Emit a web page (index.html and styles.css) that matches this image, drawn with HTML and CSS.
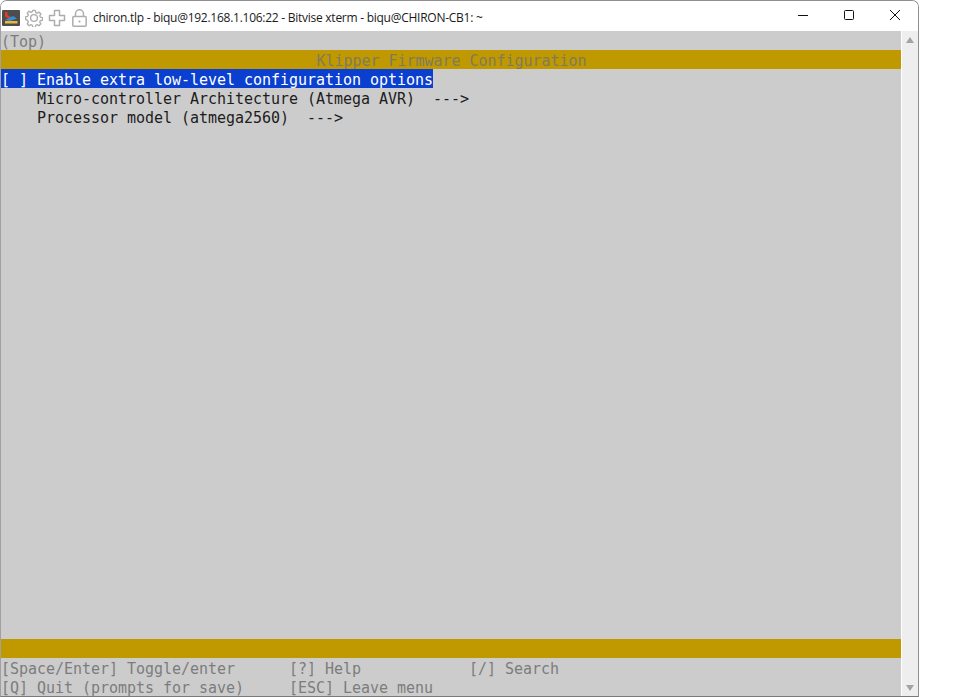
FILE: index.html
```html
<!DOCTYPE html>
<html lang="en">
<head>
<meta charset="utf-8">
<title>Bitvise xterm</title>
<link rel="stylesheet" href="styles.css">
</head>
<body>
<div class="window">
  <header class="titlebar">
    <div class="tools">
      <svg class="app-icon" width="18" height="16" viewBox="0 0 18 16">
        <rect width="18" height="16" rx="1" fill="#4d4d4d"/>
        <path d="M3 2h2.500v3l6 3.500H6L3 6.500z" fill="#e23b2e"/>
        <path d="M3 10l8-4 4 2.500-7 2.500z" fill="#2f8fd8"/>
        <path d="M3 11h12.500v2.500H3z" fill="#f2b632"/>
      </svg>
      <svg class="tool-gear" width="18" height="18" viewBox="0 0 18 18" fill="none" stroke="#adadad" stroke-width="1.4">
        <path d="M7.600 1h2.800l.4 2.200 1.500.7 1.900-1.200 2 2-1.200 1.900.7 1.500 2.200.4v2.800l-2.200.4-.7 1.500 1.200 1.900-2 2-1.900-1.200-1.500.7-.4 2.200H7.600l-.4-2.200-1.500-.7-1.900 1.200-2-2 1.200-1.900-.7-1.500L.1 10.400V7.600l2.200-.4.7-1.500-1.200-1.900 2-2 1.900 1.200 1.500-.7z" transform="translate(.5 .5) scale(.95)" stroke-linejoin="round"/>
        <circle cx="9" cy="9" r="3.400"/>
      </svg>
      <svg class="tool-plus" width="18" height="18" viewBox="0 0 18 18" fill="none" stroke="#adadad" stroke-width="1.5">
        <path d="M6.500 1.500h5v5h5v5h-5v5h-5v-5h-5v-5h5z" stroke-linejoin="round"/>
      </svg>
      <svg class="tool-lock" width="15" height="18" viewBox="0 0 15 18" fill="none" stroke="#adadad" stroke-width="1.500">
        <rect x=".8" y="7.500" width="13.400" height="9.700" rx="1"/>
        <path d="M3.500 7.500V4.800a4 4 0 0 1 8 0v2.700"/>
        <path d="M7.500 11.500v2" stroke-width="1.800"/>
      </svg>
    </div>
    <div class="title">chiron.tlp - biqu@192.168.1.106:22 - Bitvise xterm - biqu@CHIRON-CB1: ~</div>
    <div class="controls">
      <svg width="12" height="12" viewBox="0 0 12 12" fill="none" stroke="#111" stroke-width="1"><path d="M1 6.500h10"/></svg>
      <svg width="12" height="12" viewBox="0 0 12 12" fill="none" stroke="#111" stroke-width="1"><rect x="1.500" y="1.500" width="9" height="9" rx="1"/></svg>
      <svg width="12" height="12" viewBox="0 0 12 12" fill="none" stroke="#111" stroke-width="1"><path d="M1 1l10 10M11 1L1 11"/></svg>
    </div>
  </header>
  <div class="body">
    <main class="terminal">
      <div class="row dim">(Top)</div>
      <div class="row bar bar-title">Klipper Firmware Configuration</div>
      <div class="row selected">[ ] Enable extra low-level configuration options</div>
      <div class="row">    Micro-controller Architecture (Atmega AVR)  ---&gt;</div>
      <div class="row">    Processor model (atmega2560)  ---&gt;</div>
      <div class="spacer"></div>
      <div class="row bar"></div>
      <div class="row dim">[Space/Enter] Toggle/enter      [?] Help            [/] Search</div>
      <div class="row dim">[Q] Quit (prompts for save)     [ESC] Leave menu</div>
    </main>
    <aside class="scrollbar">
      <span class="arrow arrow-up"></span>
      <span class="arrow arrow-down"></span>
    </aside>
  </div>
</div>
</body>
</html>
```

FILE: styles.css
```css
html, body {
  margin: 0;
  padding: 0;
  height: 100%;
  background: #fff;
  overflow: hidden;
}

.window {
  box-sizing: border-box;
  width: 919px;
  height: 697px;
  display: flex;
  flex-direction: column;
  background: #fff;
  border: 1px solid #8f8f8f;
  border-left-color: #a0a0a0;
  border-bottom-color: #7a7a7a;
  border-radius: 7px 7px 0 0;
  overflow: hidden;
}

.titlebar {
  height: 30px;
  flex: none;
  display: flex;
  align-items: center;
  background: #fff;
}

.tools {
  display: flex;
  align-items: center;
  gap: 5px;
  margin: 4px 0 0 1px;
  width: 91px;
  flex: none;
}

.tools svg {
  flex: none;
  display: block;
}

.tool-lock {
  margin: -1px 0 0 1px;
}

.title {
  flex: 1;
  margin-top: 4px;
  font: 12px/16px "Open Sans", "Noto Sans", sans-serif;
  color: #1a1a1a;
  white-space: nowrap;
  letter-spacing: -0.26px;
}

.controls {
  display: flex;
  align-items: center;
  gap: 34px;
  padding: 0 17px 2px 0;
}

.controls svg {
  display: block;
}

.body {
  flex: 1;
  min-height: 0;
  display: flex;
}

.terminal {
  width: 900px;
  flex: none;
  display: flex;
  flex-direction: column;
  background: #cccccc;
  color: #1c1c1c;
  font-family: "DejaVu Sans Mono", monospace;
  font-size: 15px;
  letter-spacing: -0.03px;
}

.row {
  height: 19px;
  flex: none;
  line-height: 23px;
  white-space: pre;
}

.spacer {
  flex: 1;
}

.dim {
  color: #7c7c7c;
}

.bar {
  background: #c09900;
}

.bar-title {
  color: #7f7b5c;
  text-align: center;
  padding-left: 1px;
}

.selected {
  align-self: flex-start;
  overflow: hidden;
  background: #0a3fd0;
  color: #fff;
}

.scrollbar {
  flex: 1;
  margin-left: 1px;
  background: #eeeeee;
  display: flex;
  flex-direction: column;
  justify-content: space-between;
  align-items: center;
  padding: 6px 0 5px;
}

.arrow {
  width: 0;
  height: 0;
  border-left: 4px solid transparent;
  border-right: 4px solid transparent;
}

.arrow-up {
  border-bottom: 6px solid #a3a3a3;
}

.arrow-down {
  border-top: 6px solid #a3a3a3;
}
```
